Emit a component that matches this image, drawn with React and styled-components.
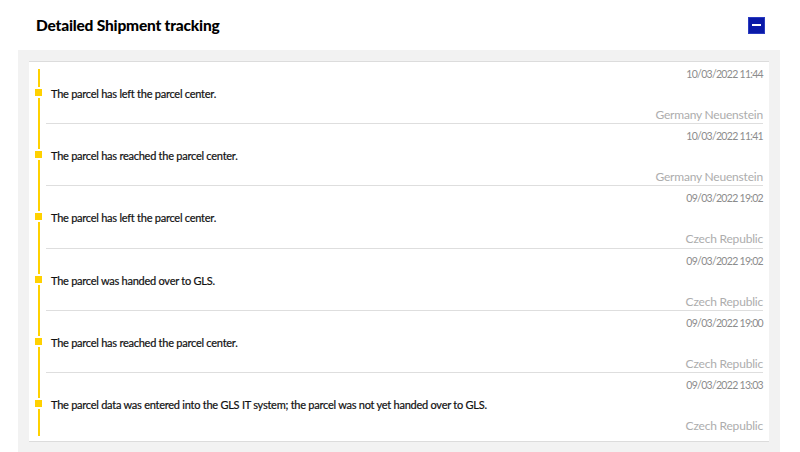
import React from 'react';
import styled, { createGlobalStyle } from 'styled-components';

const GlobalStyle = createGlobalStyle`
  html, body {
    margin: 0;
    padding: 0;
    background: #ffffff;
  }
  body {
    font-family: Lato, "Open Sans", sans-serif;
    color: #1a1a1a;
  }
`;

const yellow = '#ffd100';

const Page = styled.div`
  width: 800px;
  height: 452px;
  overflow: hidden;
  display: flex;
  flex-direction: column;
  padding: 0 20px 0 18px;
  box-sizing: border-box;
`;

const Header = styled.div`
  display: flex;
  align-items: center;
  justify-content: space-between;
  flex: 0 0 50px;
  padding: 0 15px 0 18px;
`;

const Title = styled.h2`
  margin: 0;
  font-family: Lato, sans-serif;
  font-size: 15.5px;
  font-weight: 900;
  letter-spacing: -0.2px;
  color: #000;
`;

const ToggleButton = styled.button`
  width: 17px;
  height: 17px;
  padding: 0;
  border: 1px solid #2a3ac0;
  background: #0a1aa8;
  display: flex;
  align-items: center;
  justify-content: center;
  cursor: pointer;

  &::after {
    content: '';
    width: 9px;
    height: 2px;
    background: #fff;
  }
`;

const Panel = styled.div`
  flex: 1;
  background: #f2f2f2;
  padding: 11px;
`;

const Card = styled.div`
  background: #fff;
  border-top: 1px solid #dcdcdc;
  border-bottom: 1px solid #dcdcdc;
  padding: 0 6px 6px 9px;
`;

const Timeline = styled.div`
  position: relative;
  padding-left: 8px;

  &::before {
    content: '';
    position: absolute;
    left: 0;
    top: 7px;
    bottom: -1px;
    width: 2px;
    background: ${yellow};
  }
`;

const Row = styled.div`
  position: relative;
  display: flex;
  flex-direction: column;
  height: 62.2px;
  box-sizing: border-box;
  padding-top: 5px;
  border-bottom: ${p => (p.$last ? 'none' : '1px solid #dedede')};
`;

const Dot = styled.span`
  position: absolute;
  left: -12px;
  top: 25px;
  width: 7px;
  height: 7px;
  background: ${yellow};
  border-top: 2px solid #fff;
  border-bottom: 2px solid #fff;
  margin-left: 0.5px;
`;

const Stamp = styled.div`
  align-self: flex-end;
  font-size: 10.5px;
  line-height: 14px;
  color: #8c8c8c;
  letter-spacing: -0.7px;
`;

const Message = styled.div`
  margin-top: 5px;
  padding-left: 5px;
  font-size: 11px;
  line-height: 16px;
  color: #111;
  letter-spacing: -0.25px;
  -webkit-text-stroke: 0.2px #111;
`;

const Place = styled.div`
  align-self: flex-end;
  margin-top: 5px;
  font-size: 12px;
  line-height: 16px;
  color: #adadad;
  letter-spacing: -0.2px;
`;

const events = [
  { time: '10/03/2022 11:44', text: 'The parcel has left the parcel center.', place: 'Germany Neuenstein' },
  { time: '10/03/2022 11:41', text: 'The parcel has reached the parcel center.', place: 'Germany Neuenstein' },
  { time: '09/03/2022 19:02', text: 'The parcel has left the parcel center.', place: 'Czech Republic' },
  { time: '09/03/2022 19:02', text: 'The parcel was handed over to GLS.', place: 'Czech Republic' },
  { time: '09/03/2022 19:00', text: 'The parcel has reached the parcel center.', place: 'Czech Republic' },
  {
    time: '09/03/2022 13:03',
    text: 'The parcel data was entered into the GLS IT system; the parcel was not yet handed over to GLS.',
    place: 'Czech Republic',
  },
];

export default function App() {
  return (
    <>
      <GlobalStyle />
      <Page>
        <Header>
          <Title>Detailed Shipment tracking</Title>
          <ToggleButton aria-label="Collapse" />
        </Header>
        <Panel>
          <Card>
            <Timeline>
              {events.map((e, i) => (
                <Row key={i} $last={i === events.length - 1}>
                  <Dot />
                  <Stamp>{e.time}</Stamp>
                  <Message>{e.text}</Message>
                  <Place>{e.place}</Place>
                </Row>
              ))}
            </Timeline>
          </Card>
        </Panel>
      </Page>
    </>
  );
}
